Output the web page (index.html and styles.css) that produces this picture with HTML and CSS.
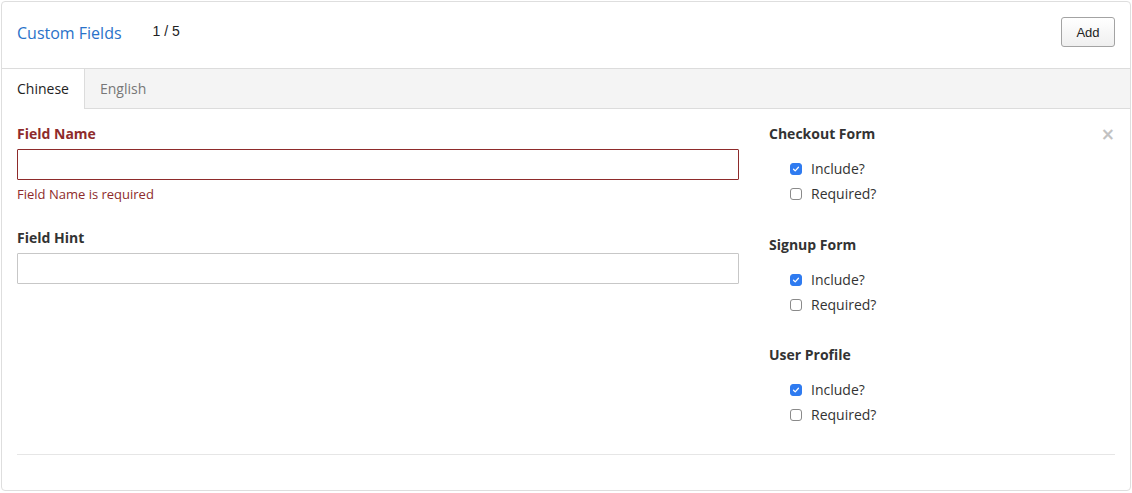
FILE: index.html
```
<!DOCTYPE html>
<html>
<head>
<meta charset="utf-8">
<link rel="stylesheet" href="styles.css">
</head>
<body>
<div class="card">
  <div class="header">
    <div class="title">Custom Fields</div>
    <div class="count">1 / 5</div>
    <button class="btn">Add</button>
  </div>
  <div class="tabs">
    <div class="tab active">Chinese</div>
    <div class="tab">English</div>
  </div>
  <div class="body">
    <div class="left">
      <div class="field error">
        <div class="label">Field Name</div>
        <div class="input"></div>
        <div class="help">Field Name is required</div>
      </div>
      <div class="field">
        <div class="label">Field Hint</div>
        <div class="input"></div>
      </div>
    </div>
    <div class="right">
      <span class="close">&times;</span>
      <div class="group">
        <div class="label">Checkout Form</div>
        <div class="check"><span class="box on"><svg viewBox="0 0 13 13"><path d="M3.3 6.8 L5.5 9 L9.7 4.2" fill="none" stroke="#fff" stroke-width="1.6" stroke-linecap="round" stroke-linejoin="round"/></svg></span>Include?</div>
        <div class="check"><span class="box"></span>Required?</div>
      </div>
      <div class="group">
        <div class="label">Signup Form</div>
        <div class="check"><span class="box on"><svg viewBox="0 0 13 13"><path d="M3.3 6.8 L5.5 9 L9.7 4.2" fill="none" stroke="#fff" stroke-width="1.6" stroke-linecap="round" stroke-linejoin="round"/></svg></span>Include?</div>
        <div class="check"><span class="box"></span>Required?</div>
      </div>
      <div class="group">
        <div class="label">User Profile</div>
        <div class="check"><span class="box on"><svg viewBox="0 0 13 13"><path d="M3.3 6.8 L5.5 9 L9.7 4.2" fill="none" stroke="#fff" stroke-width="1.6" stroke-linecap="round" stroke-linejoin="round"/></svg></span>Include?</div>
        <div class="check"><span class="box"></span>Required?</div>
      </div>
    </div>
  </div>
  <div class="divider"></div>
</div>
</body>
</html>
```
FILE: styles.css
```
* { box-sizing: border-box; }
body {
  margin: 0;
  background: #fff;
  font-family: "Open Sans", sans-serif;
  color: #333;
}
.card {
  margin: 1px;
  width: 1130px;
  height: 490px;
  border: 1px solid #dedede;
  border-radius: 4px;
  background: #fff;
}
.header {
  height: 66px;
  display: flex;
  align-items: flex-start;
  padding: 15px 15px 0 15px;
}
.title {
  font-size: 16px;
  line-height: 30px;
  margin-top: 1px;
  color: #2a72c9;
}
.count {
  font-family: "Liberation Sans", Arial, sans-serif;
  font-size: 14px;
  line-height: 30px;
  margin-left: 31px;
  margin-top: -1px;
  color: #222;
}
.btn {
  margin-left: auto;
  width: 54px;
  height: 30px;
  border: 1px solid #a3a3a3;
  border-radius: 3px;
  background: linear-gradient(#ffffff, #efefef);
  font-family: "Liberation Sans", Arial, sans-serif;
  font-size: 13px;
  color: #222;
  padding: 0;
}
.tabs {
  display: flex;
  height: 41px;
  background: #f4f4f4;
  border-top: 1px solid #dcdcdc;
  border-bottom: 1px solid #dcdcdc;
}
.tab {
  padding: 0 15px;
  font-size: 14px;
  line-height: 39px;
  color: #777;
}
.tab.active {
  background: #fff;
  color: #222;
  border-right: 1px solid #dcdcdc;
  width: 83px;
  height: 40px;
}
.body {
  display: flex;
  gap: 30px;
  padding: 15px 15px 0 15px;
  height: 345px;
}
.left {
  width: 722px;
}
.label {
  font-size: 14px;
  font-weight: 700;
  line-height: 20px;
  color: #333;
}
.field { margin-bottom: 24px; }
.input {
  margin-top: 5px;
  height: 31px;
  border: 1px solid #c7c7c7;
  border-radius: 1px;
}
.error .label { color: #8e2b2b; }
.error .input { border-color: #8e2b2b; }
.help {
  margin-top: 4px;
  font-size: 13px;
  line-height: 20px;
  color: #8e2b2b;
}
.right {
  flex: 1;
  position: relative;
}
.close {
  position: absolute;
  right: 0;
  top: 0;
  font-family: "DejaVu Sans", sans-serif;
  font-size: 17px;
  line-height: 20px;
  font-weight: 700;
  color: #c2c2c2;
}
.group { margin-bottom: 28.5px; }
.group .label { margin-bottom: 12px; }
.check {
  display: flex;
  align-items: center;
  height: 25px;
  padding-left: 21px;
  font-size: 14px;
  color: #333;
}
.box {
  width: 12px;
  height: 12px;
  border: 1px solid #8a8a8a;
  border-radius: 3px;
  margin-right: 9px;
  margin-top: 1px;
  background: #fff;
  display: flex;
}
.box.on {
  background: #2f7bf0;
  border-color: #2f7bf0;
}
.box svg { width: 10px; height: 10px; }
.divider {
  margin: 0 15px;
  border-top: 1px solid #e6e6e6;
}
```
